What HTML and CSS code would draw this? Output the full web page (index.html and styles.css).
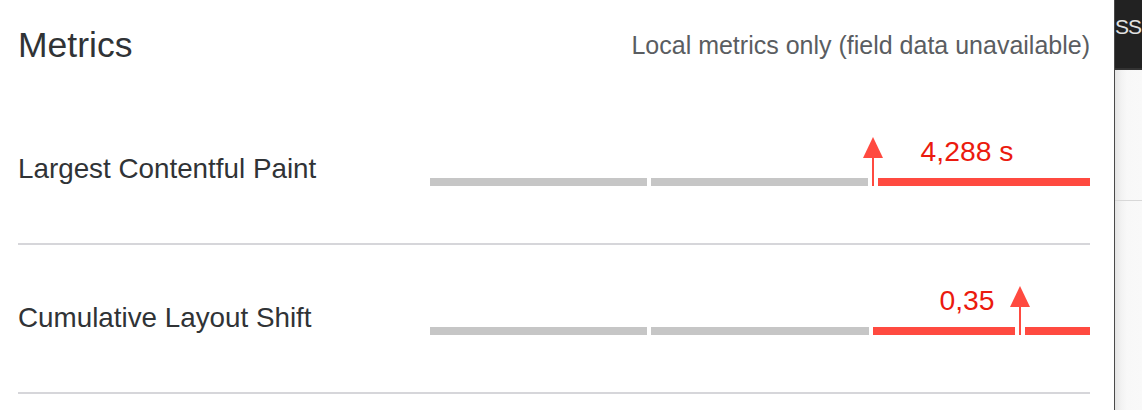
FILE: index.html
```html
<!DOCTYPE html>
<html lang="en">
<head>
<meta charset="utf-8">
<title>Metrics</title>
<link rel="stylesheet" href="styles.css">
</head>
<body>
<div class="page">
  <main class="metrics">
    <header class="metrics-header">
      <h2 class="metrics-title">Metrics</h2>
      <span class="metrics-note">Local metrics only (field data unavailable)</span>
    </header>

    <section class="metric-row">
      <div class="metric-label">Largest Contentful Paint</div>
      <div class="metric-graph">
        <div class="metric-value-row"><span class="metric-value">4,288 s</span></div>
        <div class="track">
          <span class="seg seg-gray"></span>
          <span class="seg seg-gray"></span>
          <span class="seg seg-red"></span>
          <div class="marker" style="left: 67.12%">
            <span class="marker-head"></span>
            <span class="marker-stem"></span>
            <span class="marker-cut"></span>
          </div>
        </div>
      </div>
    </section>

    <section class="metric-row">
      <div class="metric-label">Cumulative Layout Shift</div>
      <div class="metric-graph">
        <div class="metric-value-row"><span class="metric-value">0,35</span></div>
        <div class="track">
          <span class="seg seg-gray"></span>
          <span class="seg seg-gray"></span>
          <span class="seg seg-red"></span>
          <div class="marker" style="left: 89.39%">
            <span class="marker-head"></span>
            <span class="marker-stem"></span>
            <span class="marker-cut"></span>
          </div>
        </div>
      </div>
    </section>
  </main>

  <aside class="side">
    <div class="side-head"><span class="side-title">SS</span></div>
    <div class="side-body">
      <div class="side-block"></div>
    </div>
  </aside>
</div>
</body>
</html>
```

FILE: styles.css
```css
html, body {
  margin: 0;
  padding: 0;
  background: #ffffff;
}

body {
  font-family: "Liberation Sans", Arial, Helvetica, sans-serif;
  color: #333333;
  overflow: hidden;
}

.page {
  display: flex;
  width: 1142px;
  height: 410px;
  overflow: hidden;
}

.metrics {
  width: 1115px;
  flex: none;
  box-sizing: border-box;
  padding: 25px 24px 0 18px;
  background: #ffffff;
  border-right: 1px solid #4a4a4a;
}

.metrics-header {
  display: flex;
  justify-content: space-between;
  align-items: center;
  height: 40px;
  margin-bottom: 31px;
}

.metrics-title {
  margin: 0;
  font-size: 35.5px;
  font-weight: 400;
  line-height: 40px;
  color: #303336;
}

.metrics-note {
  font-size: 25px;
  line-height: 30px;
  color: #5a5d61;
  margin-top: 0;
}

.metric-row {
  display: grid;
  grid-template-columns: 1fr 660px;
  height: 147px;
  border-bottom: 2px solid #d6d6da;
}

.metric-label {
  align-self: center;
  font-size: 27.8px;
  color: #303336;
  padding-bottom: 1px;
}

.metric-graph {
  display: flex;
  flex-direction: column;
  padding-top: 39px;
}

.metric-value-row {
  display: flex;
  justify-content: flex-end;
  height: 32px;
}

.metric-value {
  width: 246px;
  text-align: center;
  font-size: 28.3px;
  line-height: 32px;
  color: #eb1a0e;
}

.track {
  position: relative;
  display: flex;
  gap: 4px;
  height: 8px;
  margin-top: 11px;
}

.seg {
  flex: 1;
  height: 8px;
}

.seg-gray {
  background: #c6c6c6;
}

.seg-red {
  background: #ff4a40;
}

.marker {
  position: absolute;
  bottom: 0;
  width: 10px;
  height: 49px;
  transform: translateX(-50%);
  display: flex;
  flex-direction: column;
  align-items: center;
}

.marker-head {
  width: 0;
  height: 0;
  border-left: 10px solid transparent;
  border-right: 10px solid transparent;
  border-bottom: 21px solid #ff4a40;
  flex: none;
}

.marker-stem {
  flex: 1;
  width: 2px;
  background: #ff4a40;
}

.marker-cut {
  flex: none;
  width: 10px;
  height: 8px;
  background: linear-gradient(90deg, #ffffff 4px, #ff4a40 4px, #ff4a40 6px, #ffffff 6px);
}

.side {
  flex: 1;
  display: flex;
  flex-direction: column;
  background: #f4f4f4;
}

.side-head {
  height: 70px;
  flex: none;
  box-sizing: border-box;
  background: #222222;
  border-bottom: 2px solid #333333;
  overflow: hidden;
  white-space: nowrap;
}

.side-title {
  display: block;
  font-size: 21px;
  letter-spacing: -1px;
  line-height: 30px;
  padding-top: 12px;
  color: #e2e2e2;
}

.side-body {
  flex: 1;
  background: linear-gradient(90deg, #e4e4e4 0, #f2f2f2 6px, #f8f8f8 12px, #f9f9f9 100%);
}

.side-block {
  height: 130px;
  border-bottom: 1px solid #d8d8d8;
}
```
